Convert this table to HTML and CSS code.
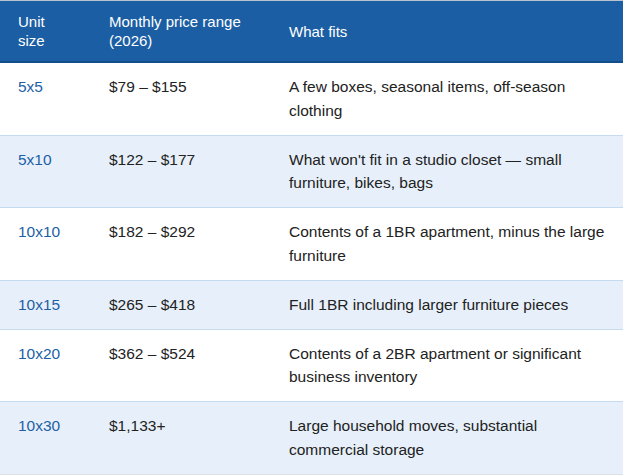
FILE: index.html
```html
<!DOCTYPE html>
<html>
<head>
<meta charset="utf-8">
<link rel="stylesheet" href="styles.css">
</head>
<body>
<div class="wrap">
<table class="units">
  <colgroup>
    <col class="c1"><col class="c2"><col class="c3">
  </colgroup>
  <thead>
    <tr><th>Unit<br>size</th><th>Monthly price range<br>(2026)</th><th>What fits</th></tr>
  </thead>
  <tbody>
    <tr><td class="size">5x5</td><td>$79 – $155</td><td>A few boxes, seasonal items, off-season clothing</td></tr>
    <tr class="alt"><td class="size">5x10</td><td>$122 – $177</td><td>What won't fit in a studio closet — small furniture, bikes, bags</td></tr>
    <tr><td class="size">10x10</td><td>$182 – $292</td><td>Contents of a 1BR apartment, minus the large furniture</td></tr>
    <tr class="alt"><td class="size">10x15</td><td>$265 – $418</td><td>Full 1BR including larger furniture pieces</td></tr>
    <tr><td class="size">10x20</td><td>$362 – $524</td><td>Contents of a 2BR apartment or significant business inventory</td></tr>
    <tr class="alt"><td class="size">10x30</td><td>$1,133+</td><td>Large household moves, substantial commercial storage</td></tr>
  </tbody>
</table>
</div>
</body>
</html>
```
FILE: styles.css
```css
html, body {
  margin: 0;
  padding: 0;
  background: #ffffff;
}
.wrap {
  width: 623px;
  border-top: 1px solid #b9c3cc;
  border-bottom: 1px solid #dde1e5;
}
.units {
  width: 623px;
  border-collapse: collapse;
  table-layout: fixed;
  font-family: "Liberation Sans", Arial, sans-serif;
}
.c1 { width: 91px; }
.c2 { width: 180px; }
.c3 { width: 352px; }
.units th {
  background: #1b5ea3;
  color: #ffffff;
  font-weight: normal;
  font-size: 15px;
  line-height: 19px;
  text-align: left;
  vertical-align: middle;
  padding: 11px 18px 11px 18px;
  border-bottom: 2px solid #134d8a;
}
.units td {
  font-size: 15.5px;
  line-height: 23.8px;
  color: #222222;
  vertical-align: top;
  padding: 12px 18px 12px 18px;
  border-bottom: 1px solid #c4dbf0;
}
.units tr:last-child td {
  border-bottom: none;
}
.units td.size {
  color: #1d5fa6;
}
.units tr.alt td {
  background: #e7f0fa;
}
```
